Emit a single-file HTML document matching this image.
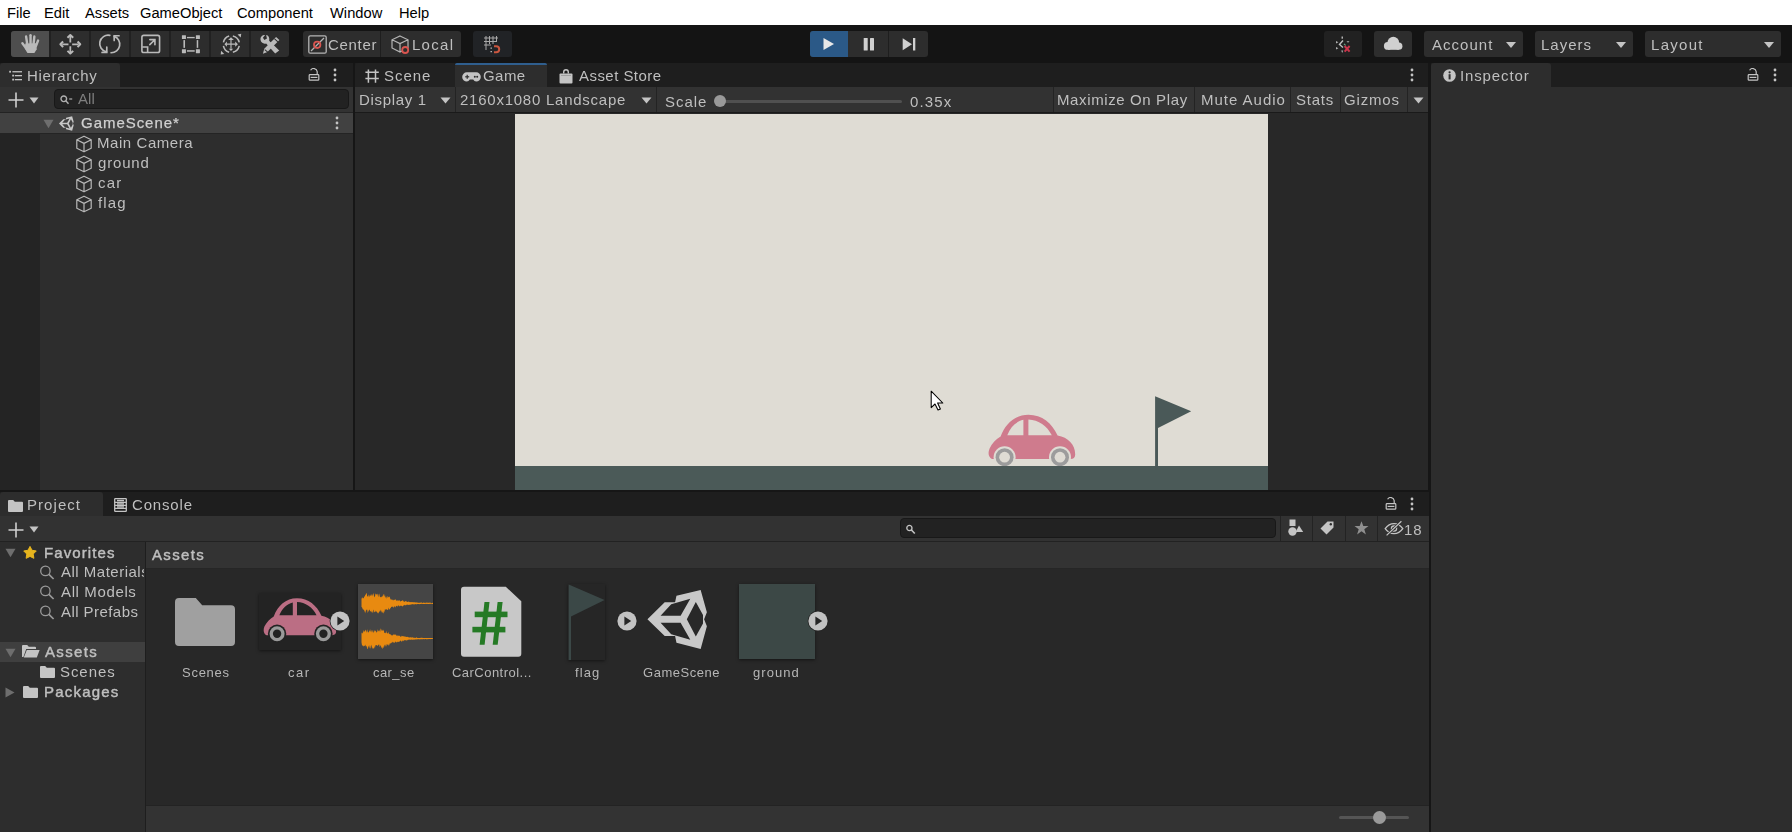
<!DOCTYPE html>
<html><head><meta charset="utf-8">
<style>
*{margin:0;padding:0;box-sizing:border-box}
html,body{width:1792px;height:832px;overflow:hidden;background:#161616;font-family:"Liberation Sans",sans-serif;color:#c4c4c4}
.a{position:absolute}
.t{position:absolute;white-space:nowrap;font-size:15px;line-height:16px;color:#bfbfbf;will-change:transform}
#menu{left:0;top:0;width:1792px;height:25px;background:#fff}
#menu span{position:absolute;top:4.8px;font-size:14.7px;color:#000;line-height:17px}
#tb{left:0;top:25px;width:1792px;height:38px;background:#141414}
.btn{position:absolute;background:#2e2e2e;border-radius:3px}
.panel{position:absolute;background:#282828}
.tabbar{position:absolute;background:#1e1e1e}
.tab{position:absolute;background:#2d2d2d;border-radius:3px 3px 0 0}
</style></head><body>
<div id="menu" class="a">
<span style="left:7px">File</span>
<span style="left:44px">Edit</span>
<span style="left:85px">Assets</span>
<span style="left:140px">GameObject</span>
<span style="left:237px">Component</span>
<span style="left:330px">Window</span>
<span style="left:399px">Help</span>
</div>
<div id="tb" class="a"></div>

<!-- tools -->
<div class="btn" style="left:11px;top:31px;width:278px;height:26px;background:#2d2d2d"></div>
<div class="a" style="left:11px;top:31px;width:38px;height:26px;background:#4e4e4e;border-radius:3px 0 0 3px"></div>
<div class="a" style="left:49px;top:31px;width:2px;height:26px;background:#212121"></div>
<div class="a" style="left:89px;top:31px;width:2px;height:26px;background:#212121"></div>
<div class="a" style="left:129px;top:31px;width:2px;height:26px;background:#212121"></div>
<div class="a" style="left:169px;top:31px;width:2px;height:26px;background:#212121"></div>
<div class="a" style="left:209px;top:31px;width:2px;height:26px;background:#212121"></div>
<div class="a" style="left:249px;top:31px;width:2px;height:26px;background:#212121"></div>
<svg class="a" style="left:16px;top:30px" width="30" height="28" viewBox="0 0 891 832"><g stroke="#bababa" stroke-width="72" stroke-linecap="round"><path d="M190 395L300 545"/><path d="M300 195L335 430"/><path d="M432 155V410"/><path d="M545 195L522 410"/><path d="M655 315L592 480"/></g><path fill="#bababa" d="M275 400L610 390L615 570L545 685L340 685L262 560Z"/></svg>
<svg class="a" style="left:55px;top:30px" width="30" height="28" viewBox="0 0 891 832"><g stroke="#bababa" stroke-width="52" fill="none"><path d="M455 175V370M455 480V655M215 425H400M510 425H700"/><path d="M370 230L455 150L540 230M370 620L455 700L540 620M240 340L160 425L240 510M670 340L750 425L670 510" stroke-width="60" stroke-linejoin="round"/></g></svg>
<svg class="a" style="left:95px;top:30px" width="30" height="28" viewBox="0 0 891 832"><g stroke="#bababa" stroke-width="50" fill="none" stroke-linecap="round"><path d="M440 160A250 250 0 0 0 340 650"/><path d="M350 510V665H210"/><path d="M480 675A250 250 0 0 0 570 190"/><path d="M570 310V170H715"/></g></svg>
<svg class="a" style="left:135px;top:30px" width="30" height="28" viewBox="0 0 891 832"><g stroke="#bababa" stroke-width="48" fill="none"><rect x="205" y="160" width="525" height="510" rx="55"/><path d="M215 505H375V665"/><path d="M440 435L590 290M440 285H592V440" stroke-linecap="round"/></g></svg>
<svg class="a" style="left:175px;top:30px" width="30" height="28" viewBox="0 0 891 832"><g fill="#bababa"><rect x="205" y="155" width="120" height="115" rx="12"/><rect x="620" y="155" width="120" height="115" rx="12"/><rect x="205" y="570" width="120" height="118" rx="12"/><rect x="620" y="570" width="120" height="118" rx="12"/><rect x="355" y="205" width="230" height="40"/><rect x="355" y="600" width="230" height="45"/><rect x="250" y="300" width="48" height="230"/><rect x="645" y="300" width="45" height="230"/></g></svg>
<svg class="a" style="left:215px;top:30px" width="30" height="28" viewBox="0 0 891 832"><g stroke="#bababa" stroke-width="46" fill="none"><path d="M250 370A250 250 0 0 1 420 180M530 180A250 250 0 0 1 720 370M720 470A250 250 0 0 1 530 660M420 660A250 250 0 0 1 250 470"/><path d="M475 290V560M350 420H610" stroke-width="34"/></g><g fill="#bababa"><path d="M390 295L475 215L560 295Z"/><path d="M410 555L475 625L540 555Z"/><path d="M280 420L355 345V495Z"/><path d="M600 345L680 420L600 495Z"/><path d="M670 130L780 110L765 220Z"/><path d="M180 615L275 710L170 725Z"/></g></svg>
<svg class="a" style="left:255px;top:30px" width="30" height="28" viewBox="0 0 891 832"><g fill="#bababa"><path d="M235 705L275 560L625 210L725 300L370 655Z"/><path d="M300 150C210 150 150 210 165 300C175 380 250 420 330 400L600 700L720 610L420 320C440 230 400 160 330 150L355 250L280 300L235 230Z"/></g><path d="M575 255L680 355M290 585L395 675" stroke="#2d2d2d" stroke-width="30"/></svg>

<div class="btn" style="left:303px;top:31px;width:158px;height:26px;background:#2d2d2d"></div>
<div class="a" style="left:380px;top:31px;width:1px;height:26px;background:#1e1e1e"></div>
<svg class="a" style="left:308px;top:35px" width="19" height="19" viewBox="0 0 19 19" fill="none"><rect x="0.8" y="0.8" width="17.4" height="17.4" rx="1.5" stroke="#b5b5b5" stroke-width="1.3"/><path d="M3 16L16 3" stroke="#b5b5b5" stroke-width="1.2"/><circle cx="9.2" cy="9.8" r="3.2" stroke="#d8544f" stroke-width="1.8"/></svg>
<div class="t" style="left:328.45px;top:37.30px;letter-spacing:0.700px;font-size:15px">Center</div>
<svg class="a" style="left:391px;top:35px" width="20" height="20" viewBox="0 0 20 20" fill="none" stroke="#b5b5b5" stroke-width="1.2"><path d="M9 1L17 4.8V13L9 17L1 13V4.8Z M1 4.8L9 8.6L17 4.8 M9 8.6V17"/><circle cx="14.2" cy="15" r="3" stroke="#d8544f" stroke-width="1.8" fill="#2d2d2d"/></svg>
<div class="t" style="left:412.35px;top:37.30px;letter-spacing:1.275px;font-size:15px">Local</div>
<div class="btn" style="left:473px;top:31px;width:39px;height:26px;background:#212326"></div>
<svg class="a" style="left:483px;top:35px" width="20" height="20" viewBox="0 0 20 20" fill="none" stroke="#a8a8a8" stroke-width="1"><path d="M3 1v14M6.5 1v8M10 1v8M13.5 1v6M1 3h14M1 6.5h13M1 10h7"/><path d="M11 11.2h2.2a3 3 0 0 1 0 6H11" stroke="#c9563f" stroke-width="2"/><path d="M8.2 12.5v1.2M8.2 16v1.2" stroke="#bdbdbd" stroke-width="1.4"/></svg>

<div class="btn" style="left:810px;top:31px;width:118px;height:26px;background:#2d2d2d"></div>
<div class="a" style="left:810px;top:31px;width:38px;height:26px;background:#2b5987;border-radius:3px 0 0 3px"></div>
<div class="a" style="left:888px;top:31px;width:1px;height:26px;background:#1e1e1e"></div>
<svg class="a" style="left:823px;top:37px" width="12" height="14" viewBox="0 0 12 14"><path d="M0.5 1 L11 7 L0.5 13Z" fill="#e8e8e8"/></svg>
<svg class="a" style="left:863px;top:38px" width="12" height="13" viewBox="0 0 12 13" fill="#d0d0d0"><rect x="0.7" y="0" width="4" height="12.5" rx="0.6"/><rect x="7" y="0" width="4" height="12.5" rx="0.6"/></svg>
<svg class="a" style="left:902px;top:38px" width="14" height="13" viewBox="0 0 14 13" fill="#d0d0d0"><path d="M0.7 0.3L10 6.3L0.7 12.3Z"/><rect x="11" y="0" width="2.3" height="12.5"/></svg>

<div class="btn" style="left:1324px;top:31px;width:38px;height:26px;background:#212121"></div>
<svg class="a" style="left:1334px;top:35px" width="20" height="20" viewBox="0 0 20 20"><g fill="#b0b0b0"><rect x="7.5" y="1.5" width="1.5" height="2.2"/><path d="M2 6l2.4 1.2L2 8.4z M2 12l2.4 1.2L2 14.4z M12.5 6.2h3l-1.5 1.5z M7.2 15.5l1 2.5 1-2.5z"/></g><path d="M9 5.5 L5.5 9.5 L9 12.5" fill="none" stroke="#c0c0c0" stroke-width="1.4"/><path d="M10 8.8l1.6 1.6" stroke="#6aa58a" stroke-width="1.2"/><path d="M10.6 11 L15.6 16.6 M15.6 11 L10.6 16.6" stroke="#c9354b" stroke-width="2"/></svg>
<div class="btn" style="left:1374px;top:31px;width:38px;height:26px;background:#2d2d2d"></div>
<svg class="a" style="left:1383px;top:36px" width="20" height="15" viewBox="0 0 20 15" fill="#d0d0d0"><circle cx="4.8" cy="9.9" r="3.9"/><circle cx="10.3" cy="6.5" r="5.8"/><circle cx="15.8" cy="10.2" r="3.6"/><rect x="4.8" y="9" width="11" height="4.8"/></svg>

<div class="btn" style="left:1424px;top:31px;width:99px;height:26px;background:#2d2d2d"></div>
<div class="t" style="left:1431.70px;top:37.30px;letter-spacing:1.017px;font-size:15px">Account</div>
<svg class="a" style="left:1505px;top:41px" width="12" height="8" viewBox="0 0 12 8"><path d="M1 1h10L6 7z" fill="#c4c4c4"/></svg>
<div class="btn" style="left:1535px;top:31px;width:98px;height:26px;background:#2d2d2d"></div>
<div class="t" style="left:1540.75px;top:37.30px;letter-spacing:0.990px;font-size:15px">Layers</div>
<svg class="a" style="left:1615px;top:41px" width="12" height="8" viewBox="0 0 12 8"><path d="M1 1h10L6 7z" fill="#c4c4c4"/></svg>
<div class="btn" style="left:1645px;top:31px;width:136px;height:26px;background:#2d2d2d"></div>
<div class="t" style="left:1651.25px;top:37.30px;letter-spacing:1.290px;font-size:15px">Layout</div>
<svg class="a" style="left:1763px;top:41px" width="12" height="8" viewBox="0 0 12 8"><path d="M1 1h10L6 7z" fill="#c4c4c4"/></svg>

<!-- hierarchy -->
<div class="tabbar" style="left:0;top:63px;width:353px;height:24px"></div>
<div class="tab" style="left:0;top:63px;width:120px;height:24px"></div>
<svg class="a" style="left:9px;top:70px" width="14" height="12" viewBox="0 0 14 12" fill="#c4c4c4"><rect x="0.2" y="0.8" width="1.8" height="1.8"/><rect x="3.4" y="1.1" width="9.6" height="1.3"/><rect x="3.2" y="4.7" width="1.8" height="1.8"/><rect x="5.8" y="5" width="7.2" height="1.3"/><rect x="3.2" y="8.7" width="1.8" height="1.8"/><rect x="5.8" y="9" width="7.2" height="1.3"/></svg>
<div class="t" style="left:27.35px;top:68.10px;letter-spacing:0.700px;font-size:15px">Hierarchy</div>
<svg class="a" style="left:308px;top:68px" width="12" height="13" viewBox="0 0 12 13" fill="none" stroke="#c4c4c4" stroke-width="1.2"><path d="M2.6 2.2A3.6 3.6 0 0 1 9.2 3.6V6.4"/><rect x="1.2" y="6.6" width="9.6" height="5.6" rx="0.8"/><path d="M2.6 9.4h6.8"/></svg>
<svg class="a" style="left:333px;top:68px" width="4" height="14" viewBox="0 0 4 14" fill="#c4c4c4"><circle cx="2" cy="2" r="1.4"/><circle cx="2" cy="7" r="1.4"/><circle cx="2" cy="12" r="1.4"/></svg>
<div class="panel" style="left:0;top:87px;width:353px;height:403px;background:#2d2d2d"></div>
<div class="a" style="left:0;top:87px;width:353px;height:25px;background:#323232"></div>
<div class="a" style="left:0;top:112px;width:353px;height:1px;background:#232323"></div>
<svg class="a" style="left:8px;top:92px" width="16" height="16" viewBox="0 0 16 16" stroke="#d0d0d0" stroke-width="1.6"><path d="M8 0.5v15M0.5 8h15"/></svg>
<svg class="a" style="left:29px;top:97px" width="10" height="7" viewBox="0 0 10 7"><path d="M0.5 0.5h9L5 6.5z" fill="#c4c4c4"/></svg>
<div class="a" style="left:54px;top:89px;width:295px;height:20px;background:#222222;border-radius:4px;border:1px solid #181818"></div>
<svg class="a" style="left:60px;top:95px" width="13" height="10" viewBox="0 0 13 10" fill="none" stroke="#b0b0b0" stroke-width="1.4"><circle cx="3.8" cy="3.8" r="2.8"/><path d="M5.8 5.8L8.5 8.8"/><path d="M9.2 4h3" stroke-width="1.2"/></svg>
<div class="t" style="left:77.80px;top:91.00px;letter-spacing:0.050px;font-size:15px;color:#7e7e7e">All</div>
<div class="a" style="left:0;top:113px;width:40px;height:377px;background:#242424"></div>
<div class="a" style="left:0;top:113px;width:353px;height:20px;background:#414141"></div>
<div class="a" style="left:0;top:133px;width:353px;height:1px;background:#242424"></div>
<svg class="a" style="left:43px;top:119px" width="11" height="10" viewBox="0 0 11 10"><path d="M0.5 0.8h10L5.5 9.2z" fill="#6e6e6e"/></svg>
<svg class="a" style="left:58.6px;top:115.6px" width="15" height="15" viewBox="90 100 440 440"><path fill="#c8c8c8" fill-rule="evenodd" d="M90 320 L215 198 L290 198 L300 150 L475 108 L520 270 L500 320 L520 370 L475 535 L300 490 L290 442 L215 442 Z M185 295 L262 212 L400 172 L330 295 Z M185 345 L330 345 L400 468 L262 428 Z M375 320 L440 195 L492 290 L492 350 L440 445 Z"/></svg>
<div class="t" style="left:81.15px;top:115.10px;letter-spacing:0.961px;font-size:15px;color:#d0d0d0;-webkit-text-stroke:0.25px currentColor">GameScene*</div>
<svg class="a" style="left:335px;top:116px" width="4" height="14" viewBox="0 0 4 14" fill="#c4c4c4"><circle cx="2" cy="2" r="1.4"/><circle cx="2" cy="7" r="1.4"/><circle cx="2" cy="12" r="1.4"/></svg>
<svg class="a" style="left:75px;top:135px" width="18" height="18" viewBox="0 0 18 18" fill="none" stroke="#b8b8b8" stroke-width="1.2" stroke-linejoin="round"><path d="M9 1.2L16.2 4.8V13.2L9 16.8L1.8 13.2V4.8Z M1.8 4.8L9 8.4L16.2 4.8 M9 8.4V16.8"/></svg><div class="t" style="left:96.75px;top:135.30px;letter-spacing:0.565px;font-size:15px">Main Camera</div>
<svg class="a" style="left:75px;top:155px" width="18" height="18" viewBox="0 0 18 18" fill="none" stroke="#b8b8b8" stroke-width="1.2" stroke-linejoin="round"><path d="M9 1.2L16.2 4.8V13.2L9 16.8L1.8 13.2V4.8Z M1.8 4.8L9 8.4L16.2 4.8 M9 8.4V16.8"/></svg><div class="t" style="left:97.50px;top:155.30px;letter-spacing:0.830px;font-size:15px">ground</div>
<svg class="a" style="left:75px;top:175px" width="18" height="18" viewBox="0 0 18 18" fill="none" stroke="#b8b8b8" stroke-width="1.2" stroke-linejoin="round"><path d="M9 1.2L16.2 4.8V13.2L9 16.8L1.8 13.2V4.8Z M1.8 4.8L9 8.4L16.2 4.8 M9 8.4V16.8"/></svg><div class="t" style="left:97.50px;top:175.30px;letter-spacing:1.200px;font-size:15px">car</div>
<svg class="a" style="left:75px;top:195px" width="18" height="18" viewBox="0 0 18 18" fill="none" stroke="#b8b8b8" stroke-width="1.2" stroke-linejoin="round"><path d="M9 1.2L16.2 4.8V13.2L9 16.8L1.8 13.2V4.8Z M1.8 4.8L9 8.4L16.2 4.8 M9 8.4V16.8"/></svg><div class="t" style="left:97.75px;top:195.30px;letter-spacing:1.100px;font-size:15px">flag</div>

<!-- game -->
<div class="tabbar" style="left:355px;top:63px;width:1073px;height:24px"></div>
<div class="a" style="left:355px;top:63px;width:100px;height:24px;background:#212121;border-radius:3px 3px 0 0"></div>
<div class="tab" style="left:455px;top:63px;width:92px;height:24px"></div>
<div class="a" style="left:455px;top:63px;width:92px;height:2px;background:#2f5e8e;border-radius:2px 2px 0 0"></div>
<svg class="a" style="left:365px;top:68.5px" width="14" height="14" viewBox="0 0 14 14" stroke="#c4c4c4" stroke-width="1.5"><path d="M3.4 0.4v13.4M10.5 0.4v13.4M0.4 3.2h13.4M0.4 9.6h13.4"/></svg>
<div class="t" style="left:384.25px;top:68.10px;letter-spacing:0.938px;font-size:15px">Scene</div>
<svg class="a" style="left:462px;top:72px" width="19" height="10" viewBox="0 0 19 10"><path fill="#c4c4c4" d="M4.8 0.3h9.4a4.6 4.6 0 0 1 0 9.2c-1.4 0-2.2-1-3-2h-3.4c-.8 1-1.6 2-3 2a4.6 4.6 0 0 1 0-9.2z"/><g fill="#2e2e2e"><rect x="3.2" y="4.2" width="4" height="1.2"/><rect x="4.6" y="2.8" width="1.2" height="4"/><circle cx="12.8" cy="4.8" r="1"/><circle cx="15.2" cy="4.8" r="1"/></g></svg>
<div class="t" style="left:483.05px;top:68.10px;letter-spacing:0.433px;font-size:15px">Game</div>
<svg class="a" style="left:559px;top:69px" width="14" height="15" viewBox="0 0 14 15"><path fill="#c4c4c4" d="M4 4.5V3a3 3 0 0 1 6 0v1.5h-1.4V3a1.6 1.6 0 0 0-3.2 0v1.5z"/><rect x="0.5" y="4.5" width="13" height="10" rx="1" fill="#c4c4c4"/><rect x="2" y="6" width="10" height="1" fill="#a0a0a0"/></svg>
<div class="t" style="left:578.70px;top:68.10px;letter-spacing:0.450px;font-size:15px">Asset Store</div>
<svg class="a" style="left:1410px;top:68px" width="4" height="14" viewBox="0 0 4 14" fill="#c4c4c4"><circle cx="2" cy="2" r="1.4"/><circle cx="2" cy="7" r="1.4"/><circle cx="2" cy="12" r="1.4"/></svg>
<div class="a" style="left:355px;top:87px;width:1073px;height:25px;background:#323232"></div>
<div class="a" style="left:355px;top:112px;width:1073px;height:1px;background:#1a1a1a"></div>
<div class="t" style="left:358.65px;top:92.20px;letter-spacing:0.669px;font-size:15px">Display 1</div>
<svg class="a" style="left:440px;top:97px" width="11" height="7" viewBox="0 0 11 7"><path d="M0.5 0.5h10L5.5 6.5z" fill="#c4c4c4"/></svg>
<div class="a" style="left:455px;top:87px;width:1px;height:25px;background:#232323"></div>
<div class="t" style="left:460.25px;top:92.20px;letter-spacing:0.756px;font-size:15px">2160x1080 Landscape</div>
<svg class="a" style="left:641px;top:97px" width="11" height="7" viewBox="0 0 11 7"><path d="M0.5 0.5h10L5.5 6.5z" fill="#c4c4c4"/></svg>
<div class="a" style="left:656px;top:87px;width:1px;height:25px;background:#232323"></div>
<div class="t" style="left:664.75px;top:93.6px;letter-spacing:0.963px;font-size:15px">Scale</div>
<div class="a" style="left:719px;top:99.5px;width:183px;height:3px;background:#505050;border-radius:2px"></div>
<div class="a" style="left:714px;top:95px;width:12px;height:12px;background:#999999;border-radius:50%"></div>
<div class="t" style="left:909.50px;top:93.6px;letter-spacing:1.150px;font-size:15px">0.35x</div>
<div class="a" style="left:1053px;top:87px;width:375px;height:25px;background:#343434"></div>
<div class="a" style="left:1053px;top:87px;width:1px;height:25px;background:#232323"></div>
<div class="t" style="left:1057.25px;top:92.20px;letter-spacing:0.620px;font-size:15px">Maximize On Play</div>
<div class="a" style="left:1194px;top:87px;width:1px;height:25px;background:#232323"></div>
<div class="t" style="left:1201.05px;top:92.20px;letter-spacing:0.983px;font-size:15px">Mute Audio</div>
<div class="a" style="left:1290px;top:87px;width:1px;height:25px;background:#232323"></div>
<div class="t" style="left:1296.25px;top:92.20px;letter-spacing:0.750px;font-size:15px">Stats</div>
<div class="a" style="left:1340px;top:87px;width:1px;height:25px;background:#232323"></div>
<div class="t" style="left:1344.35px;top:92.20px;letter-spacing:0.820px;font-size:15px">Gizmos</div>
<div class="a" style="left:1407px;top:87px;width:1px;height:25px;background:#232323"></div>
<svg class="a" style="left:1413px;top:97px" width="11" height="7" viewBox="0 0 11 7"><path d="M0.5 0.5h10L5.5 6.5z" fill="#c4c4c4"/></svg>
<div class="a" style="left:355px;top:113px;width:1073px;height:377px;background:#282828"></div>
<div class="a" style="left:515px;top:114px;width:753px;height:352px;background:#dfdcd4"></div>
<div class="a" style="left:515px;top:466px;width:753px;height:24px;background:#4b5a58"></div>
<svg class="a" style="left:980px;top:405px" width="105" height="61" viewBox="0 0 105 61">
<path fill="#cf7b8d" d="M12 54 C8.5 52.5 7.6 48 9.6 43.4 C12 38.4 16 34.4 20.6 31.6 C25.4 18.6 35 9.8 48.4 9.8 C62 9.8 72.2 18.4 77.6 30.6 C88 32.4 95.2 39.6 95.2 49.4 C95.2 52.6 93.4 54 90.6 54 Z"/>
<path fill="#dfdcd4" d="M27.3 30.2 C30.4 22 36 16.6 43.4 14.8 L43.4 30.2 Z M48.4 14.4 C58.6 14.8 67 20.6 71.8 30.2 L48.4 30.2 Z"/>
<circle cx="24.6" cy="52.2" r="11" fill="#dfdcd4"/><circle cx="80" cy="52.2" r="11" fill="#dfdcd4"/>
<circle cx="24.6" cy="52.2" r="9" fill="#9c9c9c"/><circle cx="80" cy="52.2" r="9" fill="#9c9c9c"/>
<circle cx="24.6" cy="52.2" r="5.4" fill="#dfdcd4"/><circle cx="80" cy="52.2" r="5.4" fill="#dfdcd4"/>
</svg>
<svg class="a" style="left:1150px;top:390px" width="50" height="80" viewBox="0 0 50 80"><path fill="#4a5958" d="M5.1 6.2 L41.2 21.2 L8 38 L8 80 L5.1 80 Z"/></svg>
<svg class="a" style="left:930px;top:390px" width="16" height="22" viewBox="0 0 16 22"><path d="M1.2 1.2 L1.2 17.6 L5 14 L8 20 L10.4 19 L7.6 13 L12.8 13 Z" fill="#fff" stroke="#000" stroke-width="1.05" stroke-linejoin="round"/></svg>


<!-- inspector -->
<div class="tabbar" style="left:1431px;top:63px;width:361px;height:24px"></div>
<div class="tab" style="left:1431px;top:63px;width:120px;height:24px"></div>
<svg class="a" style="left:1443px;top:69px" width="13" height="13" viewBox="0 0 13 13"><circle cx="6.5" cy="6.5" r="6.3" fill="#c4c4c4"/><rect x="5.6" y="5.2" width="2" height="5.2" fill="#2e2e2e"/><circle cx="6.6" cy="3.3" r="1.1" fill="#2e2e2e"/></svg>
<div class="t" style="left:1460.35px;top:68.10px;letter-spacing:0.869px;font-size:15px">Inspector</div>
<svg class="a" style="left:1747px;top:68px" width="12" height="13" viewBox="0 0 12 13" fill="none" stroke="#c4c4c4" stroke-width="1.2"><path d="M2.6 2.2A3.6 3.6 0 0 1 9.2 3.6V6.4"/><rect x="1.2" y="6.6" width="9.6" height="5.6" rx="0.8"/><path d="M2.6 9.4h6.8"/></svg>
<svg class="a" style="left:1773px;top:68px" width="4" height="14" viewBox="0 0 4 14" fill="#c4c4c4"><circle cx="2" cy="2" r="1.4"/><circle cx="2" cy="7" r="1.4"/><circle cx="2" cy="12" r="1.4"/></svg>
<div class="panel" style="left:1431px;top:87px;width:361px;height:745px;background:#2d2d2d"></div>

<!-- project -->
<div class="tabbar" style="left:0;top:492px;width:1429px;height:24px"></div>
<div class="tab" style="left:0;top:492px;width:103px;height:24px"></div>
<svg class="a" style="left:8px;top:500px" width="15" height="12" viewBox="0 0 15 12"><path fill="#c4c4c4" d="M0 1a1 1 0 0 1 1-1h4.2l1.6 1.8H14a1 1 0 0 1 1 1V11a1 1 0 0 1-1 1H1a1 1 0 0 1-1-1z"/></svg>
<div class="t" style="left:26.75px;top:497.00px;letter-spacing:1.058px;font-size:15px">Project</div>
<svg class="a" style="left:114px;top:498px" width="13" height="14" viewBox="0 0 13 14" fill="none" stroke="#c4c4c4" stroke-width="1.3"><rect x="0.7" y="0.7" width="11.6" height="12.6" rx="0.6"/><path d="M0.7 4.3h11.6M0.7 7.3h11.6M0.7 10.3h11.6M3 2.5h7M3 5.8h7M3 8.8h7"/></svg>
<div class="t" style="left:131.95px;top:497.00px;letter-spacing:0.825px;font-size:15px">Console</div>
<svg class="a" style="left:1385px;top:497px" width="12" height="13" viewBox="0 0 12 13" fill="none" stroke="#c4c4c4" stroke-width="1.2"><path d="M2.6 2.2A3.6 3.6 0 0 1 9.2 3.6V6.4"/><rect x="1.2" y="6.6" width="9.6" height="5.6" rx="0.8"/><path d="M2.6 9.4h6.8"/></svg>
<svg class="a" style="left:1410px;top:497px" width="4" height="14" viewBox="0 0 4 14" fill="#c4c4c4"><circle cx="2" cy="2" r="1.4"/><circle cx="2" cy="7" r="1.4"/><circle cx="2" cy="12" r="1.4"/></svg>
<div class="panel" style="left:0;top:516px;width:1429px;height:316px"></div>
<div class="a" style="left:0;top:516px;width:1429px;height:25px;background:#323232"></div>
<div class="a" style="left:0;top:541px;width:1429px;height:1px;background:#222"></div>
<svg class="a" style="left:8px;top:522px" width="16" height="16" viewBox="0 0 16 16" stroke="#d0d0d0" stroke-width="1.6"><path d="M8 0.5v15M0.5 8h15"/></svg>
<svg class="a" style="left:29px;top:526px" width="10" height="7" viewBox="0 0 10 7"><path d="M0.5 0.5h9L5 6.5z" fill="#c4c4c4"/></svg>
<div class="a" style="left:900px;top:518px;width:376px;height:20px;background:#222222;border-radius:4px;border:1px solid #181818"></div>
<svg class="a" style="left:905px;top:523px" width="12" height="12" viewBox="0 0 12 12" fill="none" stroke="#c4c4c4" stroke-width="1.3"><circle cx="4.4" cy="5" r="2.6"/><path d="M6.2 6.8L9.8 10.5" stroke-width="1.6"/></svg>
<div class="a" style="left:1280px;top:516px;width:1px;height:25px;background:#232323"></div>
<div class="a" style="left:1312px;top:516px;width:1px;height:25px;background:#232323"></div>
<div class="a" style="left:1345px;top:516px;width:1px;height:25px;background:#232323"></div>
<div class="a" style="left:1377px;top:516px;width:1px;height:25px;background:#232323"></div>
<svg class="a" style="left:1288px;top:519px" width="16" height="17" viewBox="0 0 16 17" fill="#c4c4c4"><rect x="1.5" y="0.5" width="6" height="6.5"/><circle cx="4.5" cy="12.5" r="4.2"/><path d="M11 6.5L15.2 13H7.6z"/></svg>
<svg class="a" style="left:1320px;top:521px" width="14" height="14" viewBox="0 0 14 14"><path fill="#c4c4c4" d="M7.5 0.5H13.5V6.5L6.5 13.5L0.5 7.5Z"/><circle cx="10.8" cy="3.2" r="1.2" fill="#2e2e2e"/></svg>
<svg class="a" style="left:1354px;top:521px" width="15" height="14" viewBox="0 0 15 14"><path fill="#8f8f8f" d="M7.5 0.3L9.3 5H14.5L10.3 8.2L11.9 13.4L7.5 10.2L3.1 13.4L4.7 8.2L0.5 5H5.7Z"/></svg>
<svg class="a" style="left:1384px;top:520px" width="20" height="16" viewBox="0 0 20 16" fill="none" stroke="#c4c4c4" stroke-width="1.3"><path d="M1.2 8.6C3.6 5.2 6.6 3.6 10 3.6S16.4 5.2 18.8 8.6C16.4 12 13.4 13.6 10 13.6S3.6 12 1.2 8.6Z"/><circle cx="10" cy="8.6" r="2.6"/><path d="M2.6 15.4L17.4 1.2" stroke="#2e2e2e" stroke-width="2.6"/><path d="M2.6 15.4L17.4 1.2" stroke-width="1.3"/></svg>
<div class="t" style="left:1404.00px;top:521.50px;letter-spacing:1.000px;font-size:15px">18</div>

<div class="a" style="left:0;top:542px;width:145px;height:290px;background:#2d2d2d"></div><div class="a" style="left:145px;top:542px;width:1px;height:290px;background:#1e1e1e"></div>
<div class="a" style="left:146px;top:542px;width:1283px;height:26px;background:#333333"></div>
<div class="a" style="left:146px;top:568px;width:1283px;height:1px;background:#262626"></div>
<div class="t" style="left:151.60px;top:547.40px;letter-spacing:1.360px;font-size:15px;font-weight:normal;-webkit-text-stroke:0.45px currentColor">Assets</div>

<svg class="a" style="left:5px;top:548px" width="11" height="10" viewBox="0 0 11 10"><path d="M0.5 0.8h10L5.5 9.2z" fill="#6e6e6e"/></svg>
<svg class="a" style="left:22px;top:545px" width="16" height="15" viewBox="0 0 16 15"><path fill="#e6b41e" stroke="#e6b41e" stroke-width="1" stroke-linejoin="round" d="M8.00 1.40 L10.00 5.25 L14.28 5.96 L11.23 9.05 L11.88 13.34 L8.00 11.40 L4.12 13.34 L4.77 9.05 L1.72 5.96 L6.00 5.25Z"/></svg>
<div class="t" style="left:43.55px;top:544.70px;letter-spacing:1.088px;font-size:15px;font-weight:normal;-webkit-text-stroke:0.45px currentColor">Favorites</div>
<div class="a" style="left:0;top:0;width:144px;height:700px;overflow:hidden">
<svg class="a" style="left:39px;top:564px" width="16" height="16" viewBox="0 0 16 16" fill="none" stroke="#9a9a9a" stroke-width="1.3"><circle cx="6.4" cy="6.9" r="4.7"/><path d="M9.9 10.4L14.6 15" stroke-width="1.7"/></svg><div class="t" style="left:60.90px;top:564.20px;letter-spacing:0.500px;font-size:15px">All Materials</div>
<svg class="a" style="left:39px;top:584px" width="16" height="16" viewBox="0 0 16 16" fill="none" stroke="#9a9a9a" stroke-width="1.3"><circle cx="6.4" cy="6.9" r="4.7"/><path d="M9.9 10.4L14.6 15" stroke-width="1.7"/></svg><div class="t" style="left:60.60px;top:584.20px;letter-spacing:0.628px;font-size:15px">All Models</div>
<svg class="a" style="left:39px;top:604px" width="16" height="16" viewBox="0 0 16 16" fill="none" stroke="#9a9a9a" stroke-width="1.3"><circle cx="6.4" cy="6.9" r="4.7"/><path d="M9.9 10.4L14.6 15" stroke-width="1.7"/></svg><div class="t" style="left:60.60px;top:604.20px;letter-spacing:0.440px;font-size:15px">All Prefabs</div>
</div>
<div class="a" style="left:0;top:642px;width:145px;height:20px;background:#3f3f3f"></div>
<svg class="a" style="left:5px;top:648px" width="11" height="10" viewBox="0 0 11 10"><path d="M0.5 0.8h10L5.5 9.2z" fill="#6e6e6e"/></svg>
<svg class="a" style="left:22px;top:645px" width="18" height="13" viewBox="0 0 18 13"><path fill="#c4c4c4" d="M0 1a1 1 0 0 1 1-1h4.2l1.6 1.8H13a1 1 0 0 1 1 1V4H4.2L1.4 12H0z"/><path fill="#c4c4c4" d="M4.8 5H17.6L14.8 12.6H1.8z"/></svg>
<div class="t" style="left:44.80px;top:643.80px;letter-spacing:1.360px;font-size:15px;font-weight:normal;-webkit-text-stroke:0.45px currentColor">Assets</div>
<svg class="a" style="left:40px;top:666px" width="15" height="12" viewBox="0 0 15 12"><path fill="#c4c4c4" d="M0 1a1 1 0 0 1 1-1h4.2l1.6 1.8H14a1 1 0 0 1 1 1V11a1 1 0 0 1-1 1H1a1 1 0 0 1-1-1z"/></svg>
<div class="t" style="left:60.15px;top:664.30px;letter-spacing:0.930px;font-size:15px">Scenes</div>
<svg class="a" style="left:5px;top:687px" width="10" height="11" viewBox="0 0 10 11"><path d="M0.5 0.5v10L9.5 5.5z" fill="#6e6e6e"/></svg>
<svg class="a" style="left:23px;top:686px" width="15" height="12" viewBox="0 0 15 12"><path fill="#c4c4c4" d="M0 1a1 1 0 0 1 1-1h4.2l1.6 1.8H14a1 1 0 0 1 1 1V11a1 1 0 0 1-1 1H1a1 1 0 0 1-1-1z"/></svg>
<div class="t" style="left:43.55px;top:684.40px;letter-spacing:1.207px;font-size:15px;font-weight:normal;-webkit-text-stroke:0.45px currentColor">Packages</div>

<!-- assets grid -->
<svg class="a" style="left:175px;top:597px" width="60" height="50" viewBox="0 0 15 12"><path fill="#a0a0a0" d="M0 1a1 1 0 0 1 1-1h4.2l1.6 1.8H14a1 1 0 0 1 1 1V11a1 1 0 0 1-1 1H1a1 1 0 0 1-1-1z"/></svg>
<div class="t" style="left:181.80px;top:664.80px;letter-spacing:0.730px;font-size:13px;color:#b6b6b6">Scenes</div>


<!-- car tile -->
<div class="a" style="left:259px;top:593px;width:82px;height:57px;background:#232323;box-shadow:0 1px 3px rgba(0,0,0,0.5)"></div>
<svg class="a" style="left:263px;top:598px" width="74" height="46" viewBox="8 9.5 88 55">
<path fill="#bb6e84" d="M12 54 C8.5 52.5 7.6 48 9.6 43.4 C12 38.4 16 34.4 20.6 31.6 C25.4 18.6 35 9.8 48.4 9.8 C62 9.8 72.2 18.4 77.6 30.6 C88 32.4 95.2 39.6 95.2 49.4 C95.2 52.6 93.4 54 90.6 54 Z"/>
<path fill="#232323" d="M27.3 30.2 C30.4 22 36 16.6 43.4 14.8 L43.4 30.2 Z M48.4 14.4 C58.6 14.8 67 20.6 71.8 30.2 L48.4 30.2 Z"/>
<circle cx="24.6" cy="52.2" r="11" fill="#232323"/><circle cx="80" cy="52.2" r="11" fill="#232323"/>
<circle cx="24.6" cy="52.2" r="9" fill="#9a9a9a"/><circle cx="80" cy="52.2" r="9" fill="#9a9a9a"/>
<circle cx="24.6" cy="52.2" r="5" fill="#232323"/><circle cx="80" cy="52.2" r="5" fill="#232323"/>
</svg>
<svg class="a" style="left:329px;top:610px" width="22" height="22" viewBox="0 0 22 22"><circle cx="11" cy="11" r="10.4" fill="#262626"/><circle cx="11" cy="11" r="9.6" fill="#c2c2c2"/><path d="M8.4 6.6L15.2 11L8.4 15.4Z" fill="#262626"/></svg>
<div class="t" style="left:288.20px;top:664.80px;letter-spacing:1.500px;font-size:13px;color:#b6b6b6">car</div>
<!-- car_se -->
<div class="a" style="left:358px;top:584px;width:75px;height:75px;background:#454545;box-shadow:0 1px 3px rgba(0,0,0,0.5)"></div>
<svg class="a" style="left:358px;top:584px" width="75" height="75" viewBox="0 0 75 75"><path fill="#e88a10" d="M3.5 15.1 L4.0 13.6 L4.5 13.4 L4.9 14.6 L5.4 14.3 L5.9 13.7 L6.4 11.7 L6.8 12.9 L7.3 10.6 L7.8 10.8 L8.3 8.9 L8.8 9.5 L9.2 12.8 L9.7 12.1 L10.2 12.7 L10.7 10.5 L11.1 10.9 L11.6 13.2 L12.1 10.3 L12.6 12.0 L13.1 11.4 L13.5 9.8 L14.0 12.4 L14.5 11.0 L15.0 10.1 L15.4 8.9 L15.9 11.5 L16.4 12.8 L16.9 13.3 L17.4 9.9 L17.8 9.4 L18.3 10.2 L18.8 10.8 L19.3 9.6 L19.8 11.3 L20.2 13.2 L20.7 10.5 L21.2 9.6 L21.7 11.7 L22.1 13.4 L22.6 12.7 L23.1 13.2 L23.6 12.9 L24.1 11.7 L24.5 13.1 L25.0 10.9 L25.5 9.7 L26.0 12.4 L26.4 12.3 L26.9 10.0 L27.4 13.5 L27.9 13.5 L28.4 12.3 L28.8 14.7 L29.3 13.6 L29.8 11.7 L30.3 13.5 L30.7 13.1 L31.2 12.6 L31.7 12.9 L32.2 14.6 L32.7 15.5 L33.1 15.8 L33.6 15.5 L34.1 15.3 L34.6 16.3 L35.0 16.1 L35.5 16.4 L36.0 15.2 L36.5 16.1 L37.0 16.0 L37.4 15.1 L37.9 16.0 L38.4 16.8 L38.9 16.5 L39.3 15.7 L39.8 17.2 L40.3 16.4 L40.8 16.5 L41.3 16.6 L41.7 16.2 L42.2 17.2 L42.7 17.4 L43.2 17.0 L43.7 16.9 L44.1 16.3 L44.6 16.4 L45.1 16.6 L45.6 17.4 L46.0 17.4 L46.5 17.8 L47.0 17.7 L47.5 17.0 L48.0 17.1 L48.4 17.2 L48.9 18.0 L49.4 18.0 L49.9 17.7 L50.3 17.6 L50.8 17.8 L51.3 18.3 L51.8 17.7 L52.3 17.9 L52.7 18.3 L53.2 18.3 L53.7 17.9 L54.2 18.3 L54.6 18.1 L55.1 18.5 L55.6 18.1 L56.1 18.6 L56.6 18.1 L57.0 18.5 L57.5 18.6 L58.0 18.2 L58.5 18.5 L58.9 18.5 L59.4 18.4 L59.9 18.7 L60.4 18.7 L60.9 18.7 L61.3 18.7 L61.8 18.7 L62.3 18.6 L62.8 18.7 L63.2 18.6 L63.7 18.6 L64.2 18.7 L64.7 18.9 L65.2 18.8 L65.6 18.6 L66.1 18.8 L66.6 18.7 L67.1 18.9 L67.6 18.8 L68.0 18.6 L68.5 18.7 L69.0 18.6 L69.5 18.7 L69.9 18.7 L70.4 18.8 L70.9 18.8 L71.4 18.7 L71.9 18.6 L72.3 18.8 L72.8 18.7 L73.3 18.9 L73.8 18.9 L74.2 18.9 L74.7 18.7 L75.2 18.9 L75.2 19.9 L74.7 19.9 L74.2 19.9 L73.8 19.7 L73.3 19.8 L72.8 19.7 L72.3 20.0 L71.9 19.8 L71.4 20.0 L70.9 20.0 L70.4 19.9 L69.9 19.9 L69.5 19.9 L69.0 19.8 L68.5 19.9 L68.0 19.9 L67.6 19.8 L67.1 19.9 L66.6 20.0 L66.1 19.9 L65.6 19.9 L65.2 19.9 L64.7 20.0 L64.2 19.8 L63.7 19.8 L63.2 20.0 L62.8 20.1 L62.3 20.1 L61.8 20.0 L61.3 20.2 L60.9 20.0 L60.4 20.1 L59.9 20.0 L59.4 19.9 L58.9 20.3 L58.5 20.3 L58.0 20.2 L57.5 19.9 L57.0 20.2 L56.6 20.3 L56.1 20.4 L55.6 20.4 L55.1 20.1 L54.6 20.1 L54.2 20.6 L53.7 20.3 L53.2 20.6 L52.7 20.7 L52.3 20.5 L51.8 20.8 L51.3 20.7 L50.8 20.9 L50.3 20.7 L49.9 21.1 L49.4 20.6 L48.9 20.7 L48.4 20.8 L48.0 21.6 L47.5 21.1 L47.0 21.4 L46.5 21.1 L46.0 20.8 L45.6 21.5 L45.1 21.9 L44.6 22.2 L44.1 22.6 L43.7 21.5 L43.2 22.0 L42.7 22.1 L42.2 21.6 L41.7 22.1 L41.3 22.7 L40.8 21.3 L40.3 21.5 L39.8 23.0 L39.3 21.7 L38.9 22.0 L38.4 21.8 L37.9 22.6 L37.4 23.8 L37.0 22.1 L36.5 22.7 L36.0 22.4 L35.5 24.1 L35.0 23.1 L34.6 22.7 L34.1 22.6 L33.6 23.0 L33.1 22.8 L32.7 24.6 L32.2 24.1 L31.7 25.4 L31.2 25.6 L30.7 23.4 L30.3 25.5 L29.8 26.0 L29.3 25.7 L28.8 25.4 L28.4 25.0 L27.9 26.1 L27.4 25.3 L26.9 25.2 L26.4 28.6 L26.0 26.8 L25.5 29.2 L25.0 29.2 L24.5 27.2 L24.1 29.2 L23.6 26.2 L23.1 28.7 L22.6 25.6 L22.1 27.3 L21.7 28.2 L21.2 26.4 L20.7 29.8 L20.2 28.4 L19.8 28.2 L19.3 29.5 L18.8 27.2 L18.3 27.9 L17.8 26.6 L17.4 27.8 L16.9 28.2 L16.4 27.4 L15.9 28.7 L15.4 25.6 L15.0 26.4 L14.5 29.2 L14.0 27.8 L13.5 28.4 L13.1 26.5 L12.6 27.8 L12.1 27.1 L11.6 26.0 L11.1 25.4 L10.7 26.8 L10.2 27.8 L9.7 28.9 L9.2 25.6 L8.8 26.4 L8.3 25.3 L7.8 26.9 L7.3 29.6 L6.8 26.1 L6.4 28.8 L5.9 25.0 L5.4 25.9 L4.9 25.6 L4.5 24.6 L4.0 23.2 L3.5 23.0Z"/><path fill="#e88a10" d="M3.5 49.5 L4.0 48.2 L4.5 49.8 L4.9 48.7 L5.4 45.8 L5.9 48.6 L6.4 46.5 L6.8 47.9 L7.3 45.4 L7.8 46.2 L8.3 48.7 L8.8 45.9 L9.2 48.5 L9.7 45.1 L10.2 48.3 L10.7 48.6 L11.1 47.5 L11.6 46.8 L12.1 45.0 L12.6 48.1 L13.1 46.1 L13.5 48.4 L14.0 45.6 L14.5 48.5 L15.0 45.8 L15.4 48.4 L15.9 48.5 L16.4 46.7 L16.9 46.2 L17.4 47.6 L17.8 46.3 L18.3 48.3 L18.8 48.6 L19.3 47.4 L19.8 45.2 L20.2 46.5 L20.7 47.2 L21.2 47.6 L21.7 45.4 L22.1 47.9 L22.6 44.4 L23.1 45.0 L23.6 46.5 L24.1 47.0 L24.5 45.6 L25.0 47.2 L25.5 45.5 L26.0 47.2 L26.4 49.0 L26.9 49.1 L27.4 48.5 L27.9 49.4 L28.4 46.5 L28.8 49.0 L29.3 49.1 L29.8 49.8 L30.3 49.6 L30.7 47.5 L31.2 50.0 L31.7 50.0 L32.2 51.0 L32.7 49.8 L33.1 50.7 L33.6 51.4 L34.1 51.2 L34.6 51.5 L35.0 51.0 L35.5 50.4 L36.0 50.2 L36.5 50.4 L37.0 51.2 L37.4 50.2 L37.9 50.8 L38.4 52.2 L38.9 50.8 L39.3 51.2 L39.8 52.3 L40.3 51.8 L40.8 51.4 L41.3 51.8 L41.7 51.8 L42.2 52.5 L42.7 52.7 L43.2 52.8 L43.7 51.8 L44.1 51.9 L44.6 52.2 L45.1 51.9 L45.6 52.4 L46.0 52.3 L46.5 52.3 L47.0 53.2 L47.5 52.5 L48.0 52.6 L48.4 52.9 L48.9 53.0 L49.4 52.8 L49.9 53.0 L50.3 53.5 L50.8 53.0 L51.3 53.2 L51.8 53.7 L52.3 53.3 L52.7 53.3 L53.2 53.5 L53.7 53.5 L54.2 53.3 L54.6 53.3 L55.1 53.9 L55.6 53.5 L56.1 53.7 L56.6 53.8 L57.0 53.9 L57.5 53.9 L58.0 53.5 L58.5 53.6 L58.9 53.6 L59.4 53.9 L59.9 53.9 L60.4 54.1 L60.9 53.9 L61.3 54.0 L61.8 54.0 L62.3 54.1 L62.8 53.8 L63.2 53.8 L63.7 53.8 L64.2 54.0 L64.7 53.8 L65.2 54.0 L65.6 54.1 L66.1 54.1 L66.6 54.1 L67.1 54.1 L67.6 54.0 L68.0 54.1 L68.5 53.9 L69.0 54.0 L69.5 53.9 L69.9 54.0 L70.4 54.0 L70.9 54.0 L71.4 54.1 L71.9 53.9 L72.3 54.1 L72.8 54.1 L73.3 53.9 L73.8 54.0 L74.2 54.1 L74.7 54.2 L75.2 54.2 L75.2 55.2 L74.7 55.0 L74.2 55.1 L73.8 55.1 L73.3 55.0 L72.8 55.2 L72.3 55.1 L71.9 55.0 L71.4 55.0 L70.9 55.2 L70.4 55.1 L69.9 55.0 L69.5 55.2 L69.0 55.3 L68.5 55.3 L68.0 55.3 L67.6 55.1 L67.1 55.1 L66.6 55.3 L66.1 55.3 L65.6 55.0 L65.2 55.2 L64.7 55.3 L64.2 55.2 L63.7 55.2 L63.2 55.3 L62.8 55.1 L62.3 55.4 L61.8 55.4 L61.3 55.2 L60.9 55.2 L60.4 55.3 L59.9 55.1 L59.4 55.6 L58.9 55.5 L58.5 55.4 L58.0 55.3 L57.5 55.5 L57.0 55.5 L56.6 55.7 L56.1 55.4 L55.6 55.8 L55.1 55.6 L54.6 55.9 L54.2 55.5 L53.7 55.5 L53.2 55.7 L52.7 55.6 L52.3 56.0 L51.8 55.7 L51.3 55.5 L50.8 55.8 L50.3 55.8 L49.9 55.7 L49.4 56.2 L48.9 56.4 L48.4 56.2 L48.0 56.8 L47.5 56.1 L47.0 56.3 L46.5 56.3 L46.0 56.2 L45.6 56.8 L45.1 57.2 L44.6 56.3 L44.1 57.4 L43.7 57.5 L43.2 57.4 L42.7 56.8 L42.2 56.4 L41.7 57.4 L41.3 57.8 L40.8 57.8 L40.3 58.0 L39.8 57.6 L39.3 58.2 L38.9 58.0 L38.4 58.5 L37.9 58.2 L37.4 57.4 L37.0 57.8 L36.5 59.1 L36.0 58.8 L35.5 58.6 L35.0 58.1 L34.6 57.7 L34.1 58.7 L33.6 58.5 L33.1 59.3 L32.7 59.5 L32.2 59.3 L31.7 59.4 L31.2 61.5 L30.7 60.3 L30.3 61.9 L29.8 60.4 L29.3 60.7 L28.8 60.1 L28.4 61.9 L27.9 62.8 L27.4 60.3 L26.9 63.0 L26.4 60.6 L26.0 61.8 L25.5 63.4 L25.0 64.3 L24.5 65.0 L24.1 62.8 L23.6 64.3 L23.1 62.4 L22.6 60.9 L22.1 62.6 L21.7 63.0 L21.2 60.4 L20.7 60.5 L20.2 61.2 L19.8 61.7 L19.3 61.8 L18.8 61.3 L18.3 61.1 L17.8 61.5 L17.4 61.0 L16.9 64.8 L16.4 62.0 L15.9 64.5 L15.4 64.4 L15.0 64.2 L14.5 64.8 L14.0 62.4 L13.5 60.6 L13.1 63.7 L12.6 64.7 L12.1 61.6 L11.6 64.7 L11.1 61.0 L10.7 64.1 L10.2 61.6 L9.7 65.0 L9.2 65.0 L8.8 62.8 L8.3 61.9 L7.8 62.5 L7.3 60.5 L6.8 61.9 L6.4 61.8 L5.9 61.7 L5.4 62.8 L4.9 60.9 L4.5 61.9 L4.0 61.2 L3.5 58.3Z"/></svg>
<div class="t" style="left:373.20px;top:664.80px;letter-spacing:0.420px;font-size:13px;color:#b6b6b6">car_se</div>
<!-- C# -->
<svg class="a" style="left:460px;top:586px" width="62" height="72" viewBox="0 0 62 72"><path fill="#c8c8c8" d="M4 0.7 H45.8 L61.3 15.3 V67.8 A3 3 0 0 1 58.3 70.8 H4 A3 3 0 0 1 1 67.8 V3.7 A3 3 0 0 1 4 0.7Z"/>
<g fill="#257a25"><path d="M24.5 16 H29.5 L24.6 58.8 H19.6Z"/><path d="M37.6 16 H42.6 L37.7 58.8 H32.7Z"/><rect x="14.7" y="25.6" width="32.8" height="5.6"/><rect x="12.4" y="40.8" width="33" height="5.6"/></g></svg>
<div class="t" style="left:451.85px;top:664.80px;letter-spacing:0.471px;font-size:13px;color:#b6b6b6">CarControl...</div>
<!-- flag -->
<div class="a" style="left:568px;top:584px;width:37px;height:76px;background:#262626;box-shadow:0 1px 3px rgba(0,0,0,0.5)"></div>
<svg class="a" style="left:568px;top:584px" width="37" height="76" viewBox="0 0 37 76"><path fill="#3b4847" d="M0.7 0.5 L36.6 15.9 L3 32.5 V76 H0.7Z"/></svg>
<svg class="a" style="left:616px;top:610px" width="22" height="22" viewBox="0 0 22 22"><circle cx="11" cy="11" r="10.4" fill="#262626"/><circle cx="11" cy="11" r="9.6" fill="#c2c2c2"/><path d="M8.4 6.6L15.2 11L8.4 15.4Z" fill="#262626"/></svg>
<div class="t" style="left:574.65px;top:664.80px;letter-spacing:1.067px;font-size:13px;color:#b6b6b6">flag</div>
<!-- GameScene -->
<svg class="a" style="left:635px;top:575px" width="200" height="115" viewBox="0 0 1447 832"><path fill="#c8c8c8" fill-rule="evenodd" d="M90 320 L215 198 L290 198 L300 150 L475 108 L520 270 L500 320 L520 370 L475 535 L300 490 L290 442 L215 442 Z M185 295 L262 212 L400 172 L330 295 Z M185 345 L330 345 L400 468 L262 428 Z M375 320 L440 195 L492 290 L492 350 L440 445 Z"/></svg>
<div class="t" style="left:643.25px;top:664.80px;letter-spacing:0.537px;font-size:13px;color:#b6b6b6">GameScene</div>
<!-- ground -->
<div class="a" style="left:739px;top:584px;width:76px;height:75px;background:#3c4846;box-shadow:0 1px 3px rgba(0,0,0,0.5)"></div>
<svg class="a" style="left:807px;top:610px" width="22" height="22" viewBox="0 0 22 22"><circle cx="11" cy="11" r="10.4" fill="#262626"/><circle cx="11" cy="11" r="9.6" fill="#c2c2c2"/><path d="M8.4 6.6L15.2 11L8.4 15.4Z" fill="#262626"/></svg>
<div class="t" style="left:753.10px;top:664.80px;letter-spacing:1.050px;font-size:13px;color:#b6b6b6">ground</div>
<div class="a" style="left:146px;top:805px;width:1283px;height:27px;background:#333333;border-top:1px solid #232323"></div>
<div class="a" style="left:1339px;top:816px;width:70px;height:3px;background:#555;border-radius:2px"></div>
<div class="a" style="left:1373px;top:811px;width:13px;height:13px;background:#9a9a9a;border-radius:50%"></div>

</body></html>
